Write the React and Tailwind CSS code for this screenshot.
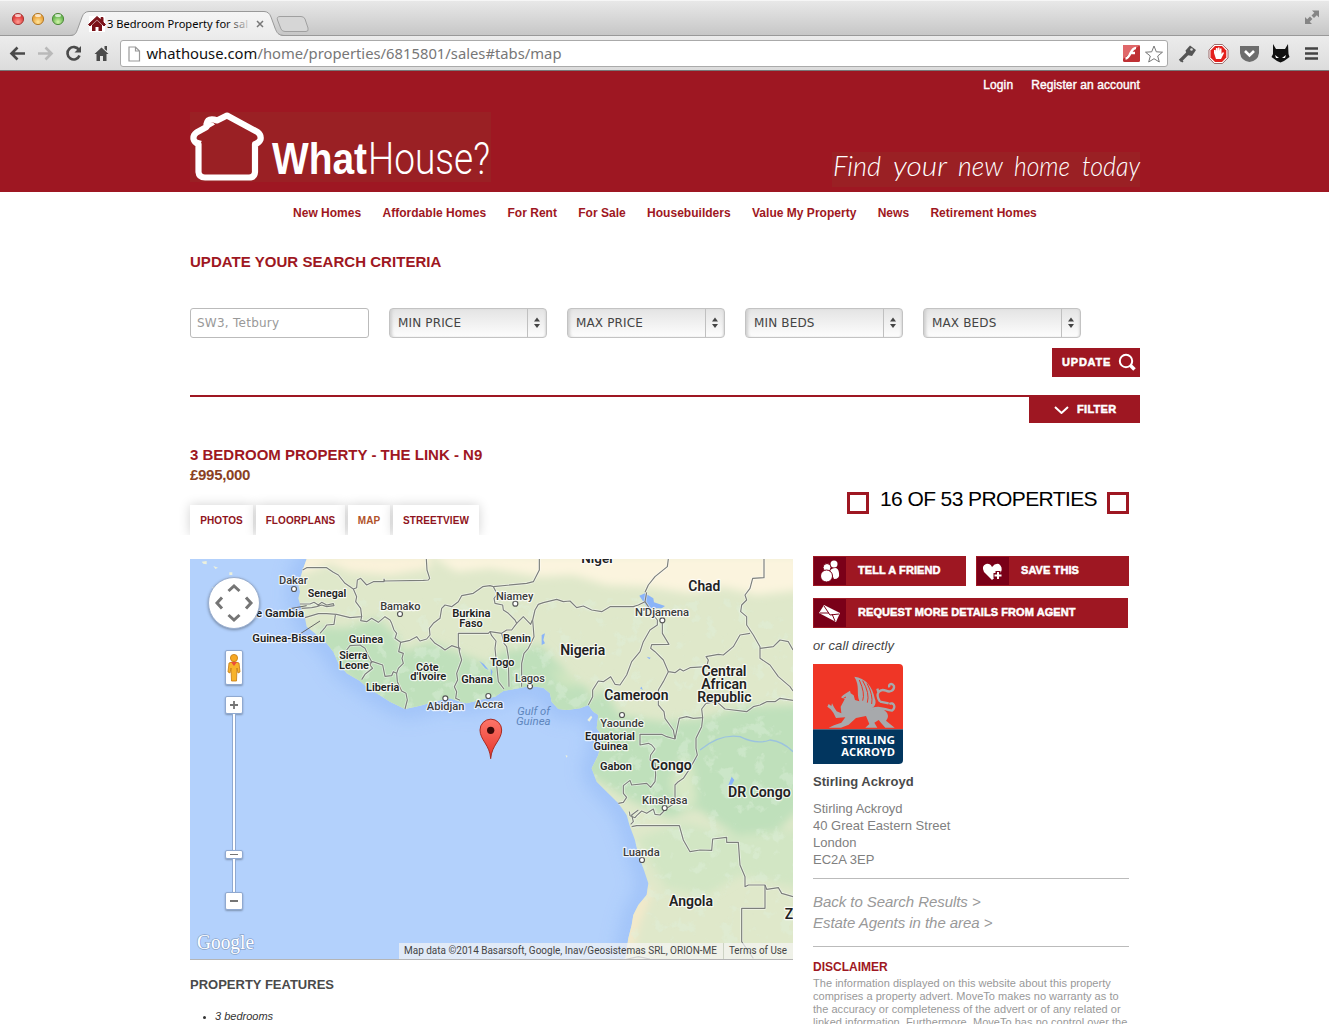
import React from "react";

const ARIAL = "font-['Liberation_Sans',Arial,sans-serif]";

const borders = [
  "M338,45L350,38H410L430,52L445,60L465,85L490,102L500,125L497,140L512,160L515,185L480,188L440,178L410,176L385,176L345,188",
  "M490,102L500,98L502,75L512,70L530,90L550,80H582V72L584,78L700,76L715,75L719,70L711,45L709,12",
  "M330,147H360L372,142L385,150L395,142L410,150L430,146L432,152L410,155L395,150L380,155L365,158L335,160",
  "M390,235L405,218L410,210L432,208L436,180",
  "M515,185L512,197L530,200L545,190L565,202L585,185L600,195L605,205L612,225L620,235L615,250L632,262L626,290L640,295L636,310L640,325L625,340L620,355L610,350L605,362L585,364L578,330L548,320L541,322",
  "M470,285L480,272L510,270L525,280L535,302L545,320L540,330L548,340L525,358L515,374",
  "M620,355L622,380L635,408L648,415L652,435L645,462",
  "M632,262L660,256L680,245L690,258L710,252L720,240L718,220L730,205L750,190L755,160L765,150L785,155L805,140L815,122L850,115L878,95L900,92L910,95",
  "M720,248L735,265L752,275L765,285L785,272L810,280L808,290L815,315L800,355L803,375L793,395L800,410L797,430L810,436",
  "M808,288L805,270V235H895L900,230L935,235L950,225L965,225L980,205L975,195L955,175L940,165L938,150L915,145L912,130L922,118L910,95L1010,85L1030,80L1048,45V12",
  "M900,230L905,242L918,258L915,280L922,350L925,380L942,402M935,235L942,265L950,275L955,305L957,395M995,395V325L1002,295L1015,280L1032,245L1028,195L1035,165L1045,148L1060,143L1100,133L1120,140L1140,138L1160,158L1180,153L1205,165L1235,170L1260,155L1330,155L1345,150L1365,140",
  "M980,205L1000,185L1022,208L1027,195",
  "M1370,112L1365,140L1375,155L1390,180L1402,195V210L1380,225L1360,260L1350,290L1325,320L1310,360L1290,390L1275,388L1262,365L1240,380L1225,378L1208,405V425L1195,450",
  "M1365,112L1375,90L1395,65L1432,35L1435,12M1722,12V68L1688,70L1680,100L1665,120L1670,135L1655,150L1652,170L1670,185V210L1690,240L1710,275V310L1740,330L1765,365L1800,395L1809,408",
  "M1417,205V235L1437,268L1385,269L1382,280L1395,290L1420,315L1435,350L1455,353L1470,342L1480,348L1500,338L1550,335L1555,315L1548,305L1585,298L1600,300L1630,275L1650,240L1680,235",
  "M1710,280L1750,275L1770,255L1795,260L1809,285",
  "M1435,350L1420,380L1405,405L1405,450L1422,470L1425,490L1450,525L1455,552L1430,545L1415,538H1350V570L1375,565L1385,570L1395,582L1382,600L1380,615L1395,625L1397,660L1395,680L1382,697L1370,685L1325,690L1320,676L1300,692V715L1310,727L1300,742L1285,745",
  "M1455,552L1468,490L1490,485L1510,490L1538,488L1535,462L1548,445L1580,440L1605,462L1670,470L1690,455L1710,450L1730,440L1755,440L1770,430L1809,436",
  "M1538,488L1535,515L1518,550V580L1522,600L1500,640L1480,670L1465,680L1455,690V745L1430,760L1410,780L1395,778L1390,762L1370,775L1355,768L1340,782L1335,788L1320,782L1318,770M1345,765L1325,780L1330,800L1322,808",
  "M1325,815L1340,812H1468L1480,855L1500,890L1530,885L1565,886L1568,852L1610,847V862H1645L1650,930L1665,965V995L1675,990H1725L1730,1003L1765,998L1775,1015L1809,1025",
  "M1725,990V1060H1655V1160L1690,1210M1300,1215L1345,1205L1380,1212",
];

// [text, centre x, baseline y, width, size, weight]
const labels = [
  ["Dakar", 310, 88, 86, 33, 400], ["Senegal", 411, 127, 115, 33, 700], ["The Gambia", 250, 185, 184, 33, 700],
  ["Guinea-Bissau", 296, 262, 218, 33, 700], ["Bamako", 631, 164, 121, 33, 400], ["Burkina", 844, 185, 115, 33, 700],
  ["Faso", 843, 215, 70, 33, 700], ["Guinea", 528, 265, 103, 33, 700], ["Sierra", 490, 313, 85, 33, 700],
  ["Leone", 492, 342, 90, 33, 700], ["Côte", 712, 347, 68, 33, 700], ["d'Ivoire", 715, 376, 108, 33, 700],
  ["Liberia", 578, 407, 100, 33, 700], ["Ghana", 861, 383, 95, 33, 700], ["Abidjan", 767, 464, 113, 33, 400],
  ["Accra", 897, 459, 85, 33, 400], ["Niamey", 974, 134, 112, 33, 400], ["Benin", 981, 260, 84, 33, 700],
  ["Togo", 937, 332, 73, 33, 700], ["Lagos", 1020, 380, 90, 33, 400], ["Niger", 1223, 24, 98, 39, 700],
  ["Chad", 1543, 108, 96, 42, 700], ["N'Djamena", 1416, 182, 162, 33, 400], ["Nigeria", 1178, 300, 135, 42, 700],
  ["Cameroon", 1339, 435, 193, 42, 700], ["Central", 1602, 362, 135, 42, 700], ["African", 1602, 401, 137, 42, 700],
  ["Republic", 1603, 441, 163, 42, 700], ["Yaounde", 1296, 515, 130, 33, 400], ["Equatorial", 1260, 554, 150, 33, 700],
  ["Guinea", 1262, 584, 103, 33, 700], ["Gabon", 1278, 644, 96, 33, 700], ["Congo", 1444, 645, 123, 42, 700],
  ["DR Congo", 1708, 726, 188, 42, 700], ["Kinshasa", 1424, 746, 136, 33, 400], ["Luanda", 1354, 902, 110, 33, 400],
  ["Angola", 1503, 1054, 132, 42, 700],
];
const cities = [[312, 102], [630, 177], [766, 430], [895, 423], [976, 146], [1020, 394], [1417, 196], [1296, 480], [1424, 759], [1356, 915]];

const land =
  "M350,12L338,45L325,90L330,110L325,130L335,165L345,190L350,215L375,235L390,250L410,265L430,290L445,325L470,355L510,378L535,400L560,415L600,440L645,462L690,452L740,438L780,430L810,440L830,445L890,430L915,425L940,408L985,400L1020,393L1060,398L1080,415L1085,440L1105,462L1130,465L1170,460L1195,450L1210,470L1225,480L1220,520L1235,540L1232,570L1225,600L1205,640L1220,680L1250,710L1285,745L1310,780L1320,815L1335,855L1345,900L1360,940L1375,985L1370,1020L1345,1050L1330,1080L1325,1110L1315,1150L1305,1215H1809V12Z";

function MapArt() {
  return (
    <svg viewBox="0 12 1809 1203" className="block h-[401px] w-[603px]" fontFamily="Roboto, sans-serif">
      <defs>
        <clipPath id="landClip"><path d={land} /></clipPath>
        <filter id="soft" x="-20%" y="-20%" width="140%" height="140%"><feGaussianBlur stdDeviation="12" /></filter>
        <filter id="coast" x="-20%" y="-20%" width="140%" height="140%"><feGaussianBlur stdDeviation="30" /></filter>
        <filter id="mottle" x="0" y="0" width="100%" height="100%">
          <feTurbulence type="fractalNoise" baseFrequency="0.022" numOctaves="5" seed="7" />
          <feColorMatrix values="0 0 0 0 .74  0 0 0 0 .875  0 0 0 0 .72  0 8 0 0 -4.7" />
        </filter>
        <linearGradient id="pin" x1="0" y1="0" x2="0" y2="1">
          <stop offset="0" stopColor="#fe7569" /><stop offset="1" stopColor="#e5352b" />
        </linearGradient>
      </defs>
      <rect y="12" width="1809" height="1203" fill="#b3d1fc" />
      <path d={land} fill="none" stroke="#8fb6f5" strokeWidth="44" opacity=".75" filter="url(#coast)" />
      <path d={land} fill="#dfe8ca" />
      <g clipPath="url(#landClip)">
        <g filter="url(#soft)">
          <path d="M300,0H720V40L600,60L480,50L420,25L330,60Z" fill="#faf2da" />
          <path d="M720,0H1830V105L1700,120L1600,95L1500,115L1380,95L1250,90L1150,60L1050,65L900,40L800,50Z" fill="#fbf4de" />
          <path d="M380,215L470,220L560,190L620,240L640,290L720,260L800,290L900,330L930,290L1050,270L1090,310L1120,340L1150,380L1200,400L1190,500H600L380,270Z" fill="#bfe0bb" />
          <path d="M1190,440L1240,400L1290,480L1420,500L1540,490L1660,455L1830,450V760L1740,850L1640,840L1520,760L1440,790L1330,740L1180,650Z" fill="#bfe0bb" />
          <path d="M1480,600L1510,640L1520,740L1480,770L1440,680Z" fill="#d8e8c6" />
          <path d="M1480,800L1640,840L1830,820V1000L1650,960L1550,1020L1430,1000L1340,850Z" fill="#d2e6c4" />
          <path d="M1375,985L1385,1020L1350,1100L1320,1215H1290L1310,1090Z" fill="#f4e9ca" />
          <path d="M1080,340L1160,370L1150,400L1110,390Z" fill="#cfe5c0" />
        </g>
        <rect y="130" width="1809" height="1085" filter="url(#mottle)" opacity=".4" />
        <g fill="#8ab4f8">
          <path d="M1348,122L1365,115L1390,130L1392,142L1425,153L1415,160H1385L1380,172L1370,155Z" />
          <path d="M868,318L882,328L896,345L885,340ZM902,340L908,350L903,365ZM1055,240L1065,235L1060,255L1065,265L1055,270ZM1370,305L1382,308L1378,313ZM1625,665L1633,675L1620,700L1615,690ZM1350,400L1355,395L1358,405Z" />
        </g>
        <path d="M1530,585Q1590,535 1650,545Q1700,570 1740,555Q1780,560 1809,590M1520,610L1490,645" fill="none" stroke="#9cc3de" strokeWidth="4" />
      </g>
      <g fill="#edf1dc"><path d="M35,20L50,18V28L40,26ZM70,33L84,38L76,42ZM118,52H127V60H118ZM66,95L74,98L70,103Z" /><path d="M1192,495L1203,482L1207,487L1198,500Z" /><path d="M1127,600L1133,603L1129,608Z" /></g>
      <g fill="none" strokeLinejoin="round">
        {borders.map((d) => <path key={"h" + d} d={d} stroke="#fff" strokeWidth="8" opacity=".55" />)}
        {borders.map((d) => <path key={d} d={d} stroke="#7c7f7b" strokeWidth="3.5" />)}
        <path d="M325,240L390,198M295,162L350,152" stroke="#666" strokeWidth="3" />
      </g>
      {cities.map(([x, y]) => <circle key={x + "-" + y} cx={x} cy={y} r="7.5" fill="#fff" stroke="#555" strokeWidth="3.5" />)}
      <g fill="#222" textAnchor="middle" stroke="#fff" strokeOpacity=".75" strokeWidth="7" strokeLinejoin="round" style={{ paintOrder: "stroke" }}>
        {labels.map(([t, x, y, w, s, b]) => (
          <text key={t + y} x={x} y={y} textLength={w} lengthAdjust="spacingAndGlyphs" fontSize={s} fontWeight={b === 700 ? 600 : 500} fill={b === 700 ? "#222" : "#3c3c3c"}>{t}</text>
        ))}
        <text x="1784" y="1092" textAnchor="start" fontSize="42" fontWeight="600">Zambia</text>
      </g>
      <g fill="#5e86bd" fontStyle="italic" textAnchor="middle" fontSize="33">
        <text x="1031" y="479" textLength="98" lengthAdjust="spacingAndGlyphs">Gulf of</text>
        <text x="1030" y="510" textLength="104" lengthAdjust="spacingAndGlyphs">Guinea</text>
      </g>
      <path d="M902,611C900,570 870,555 870,525A32,32 0 0 1 935,525C935,555 905,570 902,611Z" fill="url(#pin)" stroke="#a82a21" strokeWidth="3" />
      <circle cx="902" cy="526" r="11" fill="#3d0a08" />
    </svg>
  );
}

const knob = "flex items-center justify-center rounded-[2px] border border-[#8fa9d1] bg-white shadow-[0_1px_2px_rgba(0,0,0,0.3)]";

function MapPanel() {
  return (
    <div className="relative mt-[24px] h-[401px] w-[603px] overflow-hidden border-b border-[#b5b5b5]">
      <MapArt />
      <div className="absolute left-[18px] top-[18px] h-[52px] w-[52px] rounded-full border border-[#9aafd0] bg-white shadow-[0_1px_3px_rgba(0,0,0,0.35)]">
        <svg viewBox="0 0 50 50" className="h-full w-full" fill="none" stroke="#757575" strokeWidth="3">
          <path d="M19.5 13L25 8L30.500 13M19.500 37L25 42L30.500 37M13 19.500L8 25L13 30.500M37 19.500L42 25L37 30.500" />
        </svg>
      </div>
      <div className="absolute left-[35px] top-[91px] flex w-[18px] flex-col items-center">
        <div className={knob + " h-[35px] w-[18px] shrink-0"}>
          <svg viewBox="0 0 14 30" className="h-[30px] w-[14px]" stroke="#c47a12" strokeWidth=".8">
            <path d="M2 10Q7 7 12 10L13 19L11 20L10 15L9.500 28H4.500L4 15L3 20L1 19Z" fill="#f7b32b" />
            <path d="M4 9H10L7 13Z" fill="#ec4d3c" stroke="none" /><circle cx="7" cy="5" r="3.600" fill="#f7a823" />
          </svg>
        </div>
        <div className={knob + " mt-[11px] h-[18px] w-[18px] shrink-0"}>
          <svg viewBox="0 0 10 10" className="h-[10px] w-[10px]"><path d="M1 5H9M5 1V9" stroke="#757575" strokeWidth="1.800" /></svg>
        </div>
        <div className="h-[136px] w-[4px] border-x border-[#8fa9d1] bg-white" />
        <div className={knob + " h-[9px] w-[18px] shrink-0"}><div className="h-px w-[8px] bg-[#757575]" /></div>
        <div className="h-[33px] w-[4px] border-x border-[#8fa9d1] bg-white" />
        <div className={knob + " h-[18px] w-[18px] shrink-0"}><div className="h-[2px] w-[8px] bg-[#757575]" /></div>
      </div>
      <svg className="absolute left-[6px] top-[370px] h-[30px] w-[66px]">
        <text x="1" y="20" textLength="57" lengthAdjust="spacingAndGlyphs" fontFamily="Liberation Serif, serif" fontSize="20" fill="#fff" stroke="#6f87ad" strokeOpacity=".6" strokeWidth="1.500" style={{ paintOrder: "stroke" }}>Google</text>
      </svg>
      <svg className="absolute bottom-0 right-0 h-[16px] w-[394px] bg-[#f5f5f5]/70" fontFamily="Roboto, sans-serif" fontSize="10.5" fill="#444">
        <text x="5" y="11" textLength="313" lengthAdjust="spacingAndGlyphs">Map data ©2014 Basarsoft, Google, Inav/Geosistemas SRL, ORION-ME</text>
        <text x="330" y="11" textLength="58" lengthAdjust="spacingAndGlyphs">Terms of Use</text>
        <path d="M324.500 0V16" stroke="#cdd3c4" />
      </svg>
    </div>
  );
}

function Browser() {
  return (
    <div className="h-[71px] font-['Noto_Sans','Open_Sans',sans-serif]">
      <div className="flex h-[36px] bg-linear-to-b from-[#e9e9e9] to-[#c6c6c6]">
        <svg className="h-[36px] w-[1329px]" fill="none">
          <defs>
            <linearGradient id="fade" gradientUnits="userSpaceOnUse" x1="225" y1="0" x2="251" y2="0"><stop offset="0" stopColor="#000" /><stop offset="1" stopColor="#000" stopOpacity=".05" /></linearGradient>
            <linearGradient id="tabfill" x1="0" y1="0" x2="0" y2="1"><stop offset="0" stopColor="#f5f5f5" /><stop offset="1" stopColor="#ececec" /></linearGradient>
            <radialGradient id="r" cy=".75"><stop offset="0" stopColor="#ff9c92" /><stop offset="1" stopColor="#e0403f" /></radialGradient>
            <radialGradient id="y" cy=".75"><stop offset="0" stopColor="#ffe59a" /><stop offset="1" stopColor="#eba43c" /></radialGradient>
            <radialGradient id="g" cy=".75"><stop offset="0" stopColor="#d2f5a8" /><stop offset="1" stopColor="#6bb854" /></radialGradient>
          </defs>
          <path d="M0 .5H1329" stroke="#f6f6f6" />
          <path d="M0 35.500H1329" stroke="#999" />
          <circle cx="18" cy="19" r="5.600" fill="url(#r)" stroke="#a63b39" /><circle cx="38" cy="19" r="5.600" fill="url(#y)" stroke="#b07a2c" /><circle cx="58" cy="19" r="5.600" fill="url(#g)" stroke="#518a3e" />
          <ellipse cx="18" cy="15.500" rx="3" ry="1.500" fill="#fff" opacity=".7" /><ellipse cx="38" cy="15.500" rx="3" ry="1.500" fill="#fff" opacity=".7" /><ellipse cx="58" cy="15.500" rx="3" ry="1.500" fill="#fff" opacity=".7" />
          <path d="M70 36C76 35.500 76 33 78 28L82 17Q84 11.500 89 11.500H264Q269 11.500 271 17L275 28C277 33 278 35.500 284 36Z" fill="url(#tabfill)" />
          <path d="M70 35.500C76 35 76 33 78 28L82 17Q84 11.500 89 11.500H264Q269 11.500 271 17L275 28C277 33 278 35 284 35.500" stroke="#999" />
          <path d="M280 16.500H301Q304 16.500 305 19L308 28Q309 31.500 306 31.500H285Q282 31.500 281 29L277.500 20Q276.500 16.500 280 16.500Z" fill="#d6d6d6" stroke="#a0a0a0" />
          <rect x="89" y="16" width="16" height="16" fill="#fff" />
          <path d="M97 16.500L88.500 24.500L90 26L97 19.500L104 26L105.500 24.500L103 22V17.500H101V20Z" fill="#7b1218" stroke="#7b1218" />
          <path d="M92 25L97 20.500L102 25V31H98.500V27H95.500V31H92Z" fill="#7b1218" />
          <text x="107" y="28" fontSize="11.500" fill="url(#fade)" textLength="141" lengthAdjust="spacingAndGlyphs">3 Bedroom Property for sal</text>
          <path d="M257 21L263 27M263 21L257 27" stroke="#777" strokeWidth="1.500" />
          <g fill="#858585"><path d="M1312 10.500H1319V17.500L1316.800 15.200L1314 18L1311.500 15.500L1314.300 12.800ZM1305 17V24H1312L1309.700 21.700L1312.400 19L1310 16.500L1307.200 19.300Z" /></g>
        </svg>
      </div>
      <div className="flex h-[35px] items-start border-b border-[#777] bg-linear-to-b from-[#ececec] to-[#dcdcdc] pt-[4px]">
        <svg className="h-[28px] w-[120px] shrink-0" fill="none" stroke="#4a4a4a" strokeWidth="2.600">
          <path d="M25 13.500H12M17.500 7.500L11.500 13.500L17.500 19.500" />
          <path d="M38 13.500H51M45.500 7.500L51.500 13.500L45.500 19.500" stroke="#b9b9b9" />
          <path d="M79 10A6.200 6.200 0 1 0 79.500 15.500" /><path d="M81 6V12.500H74.500Z" fill="#4a4a4a" stroke="none" />
          <path d="M94.500 14L101.500 7.500L108.500 14H106.500V21H103V16H100V21H96.500V14ZM104.500 6H107V11L104.500 9Z" fill="#4a4a4a" stroke="none" />
        </svg>
        <div className="flex h-[27px] w-[1048px] shrink-0 items-center rounded-[3px] border border-[#aaa] bg-white pl-[7px]">
          <svg className="h-[16px] w-[13px]" fill="#fff" stroke="#999" strokeWidth="1.200"><path d="M1 1H7.500L11.500 5V15H1ZM7.500 1V5H11.500" /></svg>
          <svg className="ml-[5px] h-[24px] w-[420px]" fontSize="15" fill="#777">
            <text x="0.500" y="17" textLength="415" lengthAdjust="spacingAndGlyphs"><tspan fill="#111">whathouse.com</tspan>/home/properties/6815801/sales#tabs/map</text>
          </svg>
          <svg className="ml-auto mr-[3px] h-[20px] w-[42px]">
            <rect x="1" y="1" width="17" height="17" rx="1.500" fill="#bf3034" /><path d="M1 1H18L1 15Z" fill="#e0686a" />
            <path d="M14 4C8 4 9 14 3.500 14.500M8 9H13" fill="none" stroke="#fff" strokeWidth="2.400" />
            <path d="M32 2L34.300 7.800L40.500 8.200L35.700 12L37.300 18L32 14.700L26.700 18L28.300 12L23.500 8.200L29.700 7.800Z" fill="#fff" stroke="#777" />
          </svg>
        </div>
        <svg className="ml-[6px] h-[28px] w-[155px]">
          <g transform="translate(-1174 -40)">
            <path d="M1180 61L1188 53" stroke="#555" strokeWidth="3.200" /><path d="M1180 59L1183 62" stroke="#555" strokeWidth="1.500" /><path d="M1185.500 50.500L1190 45.500L1196 50L1192 56L1187 55Z" fill="#555" /><circle cx="1191.500" cy="49.500" r="1.300" fill="#ddd" />
            <path d="M1214.300 44.500H1222.300L1228 50V58L1222.300 63.500H1214.300L1209 58V50Z" fill="#fff" stroke="#7a3030" strokeWidth=".7" />
            <path d="M1215 46H1222L1226.300 50.500V57.500L1222 62H1215L1210.500 57.500V50.500Z" fill="#e3211d" />
            <path d="M1214 53V50H1215.500V52L1216 48H1217.500V51L1218 47.500H1219.500V51L1220 48.500H1221.500V54L1223 52L1224 53L1221 59H1216Z" fill="#fff" />
            <path d="M1240 46H1259V53Q1258 61 1249.500 62Q1241 61 1240 53Z" fill="#6d6d6d" /><path d="M1245 51L1249.500 55.500L1254 51" fill="none" stroke="#fff" strokeWidth="2.600" />
            <path d="M1273 44L1276 49H1285L1288 44L1288.500 54L1289.500 57L1284 61L1280.500 62.500L1277 61L1271.500 57L1273 54Z" fill="#111" /><path d="M1275 55L1279 58H1276ZM1286 55L1282 58H1285Z" fill="#fff" />
            <path d="M1305 48.500H1318M1305 53.500H1318M1305 58.500H1318" stroke="#444" strokeWidth="2.600" />
          </g>
        </svg>
      </div>
    </div>
  );
}

function Header() {
  return (
    <header className={"h-[121px] bg-[#9e1722] pl-[190px] " + ARIAL}>
      <div className="flex h-[121px] w-[950px] justify-between">
        <svg className="mt-[41px] h-[70px] w-[301px] shrink-0 overflow-visible bg-[#9a2024]" fill="#fff">
          <path d="M37 3.500L67.500 20Q71.500 23 70.500 27.500Q69 31 65 32V60Q64.500 65.500 59 65.500H15Q9 65.500 8.500 60V32Q4.500 31 3.500 27Q3 23 6.500 20.500L16.500 15V12Q17.500 6.500 24 7.500L27 8.500Z" fill="none" stroke="#fff" strokeWidth="6.200" strokeLinejoin="round" />
          <path d="M19 16V10.500H23L25 12.500ZM5 27L12 29L8 33Z" />
          <text x="82" y="62" textLength="95" lengthAdjust="spacingAndGlyphs" fontSize="44" fontWeight="700">What</text>
          <text x="178" y="62" textLength="122" lengthAdjust="spacingAndGlyphs" fontSize="44" fontWeight="300" fontFamily="Roboto, sans-serif">House?</text>
        </svg>
        <div className="flex flex-col items-end">
          <div className="flex h-[28px] items-center gap-[18px] text-[12px] tracking-[0.11px] text-white [-webkit-text-stroke:0.4px_white]"><a>Login</a><a>Register an account</a></div>
          <svg className="mt-[53px] h-[35px] w-[308px] overflow-visible bg-[#9a2024]" fill="#fff" fontSize="28" fontStyle="italic" fontWeight="300" fontFamily="cursive, Lato, sans-serif">
            <text x="1" y="24" textLength="48" lengthAdjust="spacingAndGlyphs">Find</text>
            <text x="61" y="24" textLength="54" lengthAdjust="spacingAndGlyphs">your</text>
            <text x="126" y="24" textLength="45" lengthAdjust="spacingAndGlyphs">new</text>
            <text x="182" y="24" textLength="56" lengthAdjust="spacingAndGlyphs">home</text>
            <text x="250" y="24" textLength="58" lengthAdjust="spacingAndGlyphs">today</text>
          </svg>
        </div>
      </div>
    </header>
  );
}

function Select({ label }) {
  return (
    <div className="flex h-[30px] w-[158px] items-center rounded-[4px] border border-[#c3c3c3] bg-linear-to-b from-[#e4e4e4] to-[#fdfdfd] pl-[8px] shadow-[inset_3px_0_3px_-1px_#cfcfcf,inset_-2px_0_2px_-1px_#d8d8d8]">
      <span className="text-[12px] tracking-[0.15px] text-[#444]">{label}</span>
      <span className="ml-auto flex h-full w-[19px] items-center justify-center border-l border-[#c0c0c0]">
        <svg className="h-[12px] w-[6px]" fill="#444"><path d="M0 4.500L3 .5L6 4.500ZM0 7L3 11L6 7Z" /></svg>
      </span>
    </div>
  );
}

function Search() {
  return (
    <section>
      <h2 className="mt-[18px] h-[20px] text-[15px] font-bold leading-[20px] tracking-[0.04px] text-[#9e1722]">UPDATE YOUR SEARCH CRITERIA</h2>
      <div className="mt-[36px] flex gap-[20px] font-['DejaVu_Sans',Verdana,sans-serif]">
        <div className="flex h-[30px] w-[179px] items-center rounded-[3px] border border-[#bbb] pl-[6px] text-[12px] tracking-[0.25px] text-[#999]">SW3, Tetbury</div>
        {["MIN PRICE", "MAX PRICE", "MIN BEDS", "MAX BEDS"].map((l) => <Select key={l} label={l} />)}
      </div>
      <div className="ml-auto mt-[10px] flex h-[29px] w-[88px] items-center bg-[#9e1722] pl-[10px] text-[11px] font-bold text-white [-webkit-text-stroke:0.5px_white]">
        <span className="tracking-[0.8px]">UPDATE</span>
        <svg className="ml-auto mr-[4px] h-[19px] w-[18px]" fill="none" stroke="#fff"><circle cx="8" cy="8" r="6.200" strokeWidth="2" /><path d="M12.500 12.500L16.500 16.500" strokeWidth="3.500" /></svg>
      </div>
      <div className="mt-[18px] flex h-[28px] justify-end border-t-2 border-[#9e1722]">
        <div className="flex h-[26px] w-[111px] items-center bg-[#9e1722] pb-[2px] pl-[25px] text-[11px] font-bold tracking-[0.3px] text-white [-webkit-text-stroke:0.5px_white]">
          <svg className="mr-[8px] mt-[2px] h-[8px] w-[15px]" fill="none" stroke="#fff" strokeWidth="2"><path d="M1 1L7.500 7L14 1" /></svg>FILTER
        </div>
      </div>
    </section>
  );
}

function ActionButton({ label, width, children }) {
  return (
    <div className="flex h-[30px] items-center bg-[#9e1722] text-[11px] font-bold text-white [-webkit-text-stroke:0.5px_white]" style={{ width }}>
      <div className="ml-px flex h-[28px] w-[32px] items-center justify-center bg-[#7a0018]"><svg viewBox="0 0 24 24" className="h-[24px] w-[24px]" fill="#fff">{children}</svg></div>
      <span className="ml-[12px] whitespace-nowrap pb-[2px] tracking-[0.08px]">{label}</span>
    </div>
  );
}

function AgentLogo() {
  return (
    <svg viewBox="21 552 270 300" className="mt-[9px] block h-[100px] w-[90px] rounded-r-[4px]">
      <rect x="21" y="552" width="270" height="196" fill="#ef3626" /><rect x="21" y="748" width="270" height="104" fill="#02365f" />
      <g fill="#a7a9ac">
        <path d="M105,652L112,645L120,640L132,632L134,640L143,646L147,660L160,664C150,635 163,620 145,590C178,593 200,620 206,655C215,675 200,685 190,690L222,684C242,690 254,708 240,722L252,732L266,743H238L226,730L218,720L205,728L214,743H178L190,732L180,708L150,714L128,734L105,743H68L84,736L106,728L118,712L90,714L82,698L74,688L64,680L68,672L76,678L78,670L84,682L92,694L106,700L104,680L112,665L116,658Z" />
        <path d="M190,690C220,675 235,690 258,692C272,680 262,665 250,672M222,665C205,640 222,625 240,632C252,638 266,632 264,618C258,608 246,612 250,622M218,640L214,626M222,665L248,670" fill="none" stroke="#a7a9ac" strokeWidth="7" />
      </g>
      <path d="M160,600Q178,640 170,662M170,602Q192,640 184,668M183,610Q202,645 197,672M112,655L120,651" fill="none" stroke="#ef3626" strokeWidth="3" />
      <g fill="#fff" fontFamily="Open Sans, sans-serif" fontWeight="700" fontSize="34">
        <text x="106" y="793" textLength="161" lengthAdjust="spacingAndGlyphs">STIRLING</text>
        <text x="106" y="828" textLength="161" lengthAdjust="spacingAndGlyphs">ACKROYD</text>
      </g>
    </svg>
  );
}

function Sidebar() {
  const square = "mt-[5px] h-[22px] w-[22px] shrink-0 border-[3px] border-[#9e1722]";
  return (
    <aside className="w-[316px]">
      <div className="flex h-[115px] items-start justify-end gap-[10px] pt-[47px]">
        <div className={square} />
        <div className="mt-px h-[22px] whitespace-nowrap pl-[1px] text-[21px] leading-[22px] tracking-[-0.6px] text-black">16 OF 53 PROPERTIES</div>
        <div className={square} />
      </div>
      <div className="mt-px flex gap-[10px]">
        <ActionButton label="TELL A FRIEND" width="153px"><circle cx="16" cy="5" r="3.500" /><path d="M12 11Q20 6 21 14Q22 20 16 20Z" /><g stroke="#7a0018"><circle cx="9" cy="8.500" r="4" /><circle cx="8.500" cy="17" r="6" /></g></ActionButton>
        <ActionButton label="SAVE THIS" width="153px"><path d="M11 21L3 13Q0 7 5 5Q9 4 11 8Q14 4 18 5Q22 8 20 13Z" /><path d="M17 12V21M12.500 16.500H21.500" stroke="#7a0018" strokeWidth="5" /><path d="M17 13V20M13.500 16.500H20.500" stroke="#fff" strokeWidth="2" /></ActionButton>
      </div>
      <div className="mt-[12px]"><ActionButton label="REQUEST MORE DETAILS FROM AGENT" width="315px"><path d="M6 4L22 12L18 21L1 12Z" /><path d="M6 5L12 14L21 13M2 12L11 12M14 13L17 20" stroke="#7a0018" fill="none" /></ActionButton></div>
      <p className="mt-[9px] h-[18px] text-[13px] italic leading-[18px] tracking-[0.1px] text-[#444]">or call directly</p>
      <AgentLogo />
      <p className="mt-[9px] h-[18px] text-[13px] font-bold leading-[18px] tracking-[0.05px] text-[#4a4a4a]">Stirling Ackroyd</p>
      <address className="mt-[9px] h-[68px] text-[13px] not-italic leading-[17px] text-[#808080]">Stirling Ackroyd<br />40 Great Eastern Street<br />London<br />EC2A 3EP</address>
      <div className="mt-[10px] border-t border-[#bbb] pt-[12px] text-[15px] italic leading-[21px] tracking-[-0.05px] text-[#999]">Back to Search Results &gt;<br />Estate Agents in the area &gt;</div>
      <div className="mt-[13px] border-t border-[#bbb] pt-[11px]">
        <h3 className="mb-px h-[18px] text-[12px] font-bold leading-[18px] text-[#9e1722]">DISCLAIMER</h3>
        <p className="whitespace-nowrap text-[11px] leading-[13px] tracking-[0.03px] text-[#999]">The information displayed on this website about this property<br />comprises a property advert. MoveTo makes no warranty as to<br />the accuracy or completeness of the advert or of any related or<br />linked information. Furthermore, MoveTo has no control over the</p>
      </div>
    </aside>
  );
}

export default function App() {
  const nav = ["New Homes", "Affordable Homes", "For Rent", "For Sale", "Housebuilders", "Value My Property", "News", "Retirement Homes"];
  const tabs = [["PHOTOS", "w-[63px]"], ["FLOORPLANS", "w-[89px]"], ["MAP", "w-[42px]"], ["STREETVIEW", "w-[86px]"]];
  return (
    <div className="h-[1024px] w-[1329px] overflow-hidden bg-white">
      <Browser />
      <Header />
      <main className={"ml-[190px] w-[950px] " + ARIAL}>
        <nav className="flex h-[42px] items-center gap-[21.3px] whitespace-nowrap pl-[103px] text-[12px] font-bold tracking-[0.02px] text-[#9e1722]">
          {nav.map((n) => <a key={n}>{n}</a>)}
        </nav>
        <Search />
        <div className="mt-[17px] flex gap-[20px]">
          <div className="w-[603px] shrink-0">
            <h1 className="mt-[5px] text-[15px] font-bold leading-[20px] text-[#9e1722]">3 BEDROOM PROPERTY - THE LINK - N9</h1>
            <p className="h-[20px] text-[15px] font-bold leading-[20px] tracking-[-0.3px] text-[#8a4023]">£995,000</p>
            <div className="-ml-[12px] mt-[8px] flex h-[42px] gap-[3px] overflow-hidden pl-[12px] pt-[12px]">
              {tabs.map(([t, w]) => (
                <div key={t} className={w + " flex h-[30px] items-center justify-center bg-white text-[10px] font-bold tracking-[0.08px] shadow-[0_0_12px_rgba(0,0,0,0.18)] " + (t === "MAP" ? "text-[#b0522a]" : "text-[#8f1420]")}>{t}</div>
              ))}
            </div>
            <MapPanel />
            <h2 className="mt-[16px] h-[18px] text-[13px] font-bold leading-[18px] text-[#4a4a4a]">PROPERTY FEATURES</h2>
            <ul className="ml-[25px] mt-[13px] list-disc text-[11px] italic leading-[18px] text-[#333] marker:text-[9px]"><li>3 bedrooms</li></ul>
          </div>
          <Sidebar />
        </div>
      </main>
    </div>
  );
}
